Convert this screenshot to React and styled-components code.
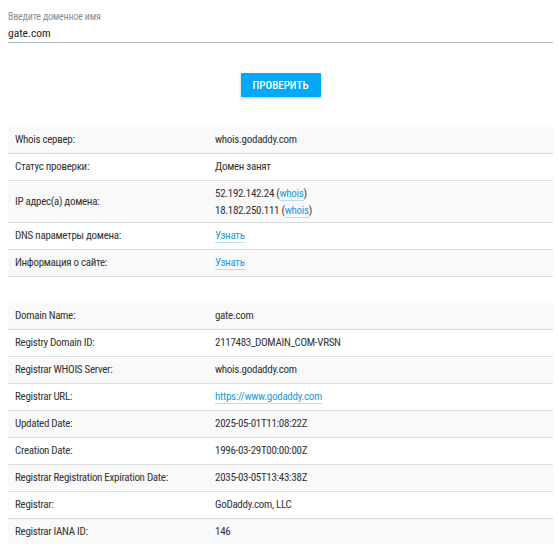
import React from "react";
import styled, { createGlobalStyle } from "styled-components";

const serverInfo = [
  { label: "Whois сервер:", value: "whois.godaddy.com" },
  { label: "Статус проверки:", value: "Домен занят" },
  {
    label: "IP адрес(а) домена:",
    ips: ["52.192.142.24", "18.182.250.111"],
  },
  { label: "DNS параметры домена:", link: "Узнать" },
  { label: "Информация о сайте:", link: "Узнать" },
];

const whoisData = [
  { label: "Domain Name:", value: "gate.com" },
  { label: "Registry Domain ID:", value: "2117483_DOMAIN_COM-VRSN" },
  { label: "Registrar WHOIS Server:", value: "whois.godaddy.com" },
  { label: "Registrar URL:", link: "https://www.godaddy.com" },
  { label: "Updated Date:", value: "2025-05-01T11:08:22Z" },
  { label: "Creation Date:", value: "1996-03-29T00:00:00Z" },
  {
    label: "Registrar Registration Expiration Date:",
    value: "2035-03-05T13:43:38Z",
  },
  { label: "Registrar:", value: "GoDaddy.com, LLC" },
  { label: "Registrar IANA ID:", value: "146" },
];

const renderValue = (row) => {
  if (row.ips) {
    return row.ips.map((ip) => (
      <Line key={ip}>
        {ip} (<TextLink href="#">whois</TextLink>)
      </Line>
    ));
  }
  if (row.link) return <TextLink href="#">{row.link}</TextLink>;
  return row.value;
};

const InfoTable = ({ rows }) => (
  <Table>
    {rows.map((row) => (
      <Row key={row.label}>
        <Label>{row.label}</Label>
        <Value $compact={!!row.ips}>{renderValue(row)}</Value>
      </Row>
    ))}
  </Table>
);

const App = () => {
  return (
    <>
      <GlobalStyle />
      <Page>
        <Field>
          <FieldLabel>Введите доменное имя</FieldLabel>
          <Input defaultValue="gate.com" />
        </Field>
        <ButtonBox>
          <CheckButton>Проверить</CheckButton>
        </ButtonBox>
        <InfoTable rows={serverInfo} />
        <InfoTable rows={whoisData} />
      </Page>
    </>
  );
};

export default App;

const GlobalStyle = createGlobalStyle`
  body {
    margin: 0;
    background: #fff;
    font-family: Roboto, "Noto Sans", sans-serif;
    font-stretch: 75%;
    color: #333;
  }
`;

const Page = styled.div`
  padding: 11px 5px 0 8px;
  display: flex;
  flex-direction: column;
`;

const Field = styled.div`
  display: flex;
  flex-direction: column;
  border-bottom: 1px solid #b4b8bf;
`;

const FieldLabel = styled.label`
  font-size: 10px;
  line-height: 12px;
  color: #8a8f96;
  letter-spacing: -0.2px;
`;

const Input = styled.input`
  border: none;
  outline: none;
  padding: 0;
  margin-top: 1px;
  height: 18px;
  font-family: inherit;
  font-stretch: 75%;
  font-size: 11.5px;
  color: #222;
  background: transparent;
`;

const ButtonBox = styled.div`
  display: flex;
  justify-content: center;
  margin: 30px 0;
`;

const CheckButton = styled.button`
  width: 80px;
  height: 24px;
  border: none;
  border-radius: 1px;
  background: #03a9f4;
  color: #fff;
  font-family: inherit;
  font-stretch: 75%;
  font-size: 11px;
  font-weight: 500;
  text-transform: uppercase;
  box-shadow: 0 1px 3px rgba(0, 0, 0, 0.3);
  cursor: pointer;
`;

const Table = styled.div`
  display: flex;
  flex-direction: column;
  margin-bottom: 26px;
`;

const Row = styled.div`
  display: grid;
  grid-template-columns: 207px 1fr;
  align-items: center;
  border-bottom: 1px solid #dcdcdc;
  font-size: 11px;
  line-height: 16px;
  letter-spacing: -0.3px;

  &:nth-child(odd) {
    background: #f9f9f9;
  }
`;

const Label = styled.div`
  padding: 5px 7px;
`;

const Value = styled.div`
  padding: ${(p) => (p.$compact ? "3.5px 7px 3.5px 0" : "5px 7px 5px 0")};
`;

const Line = styled.div`
  line-height: 17px;
`;

const TextLink = styled.a`
  color: #1a9de0;
  text-decoration: none;
  border-bottom: 1px solid #b3e0f7;
`;
